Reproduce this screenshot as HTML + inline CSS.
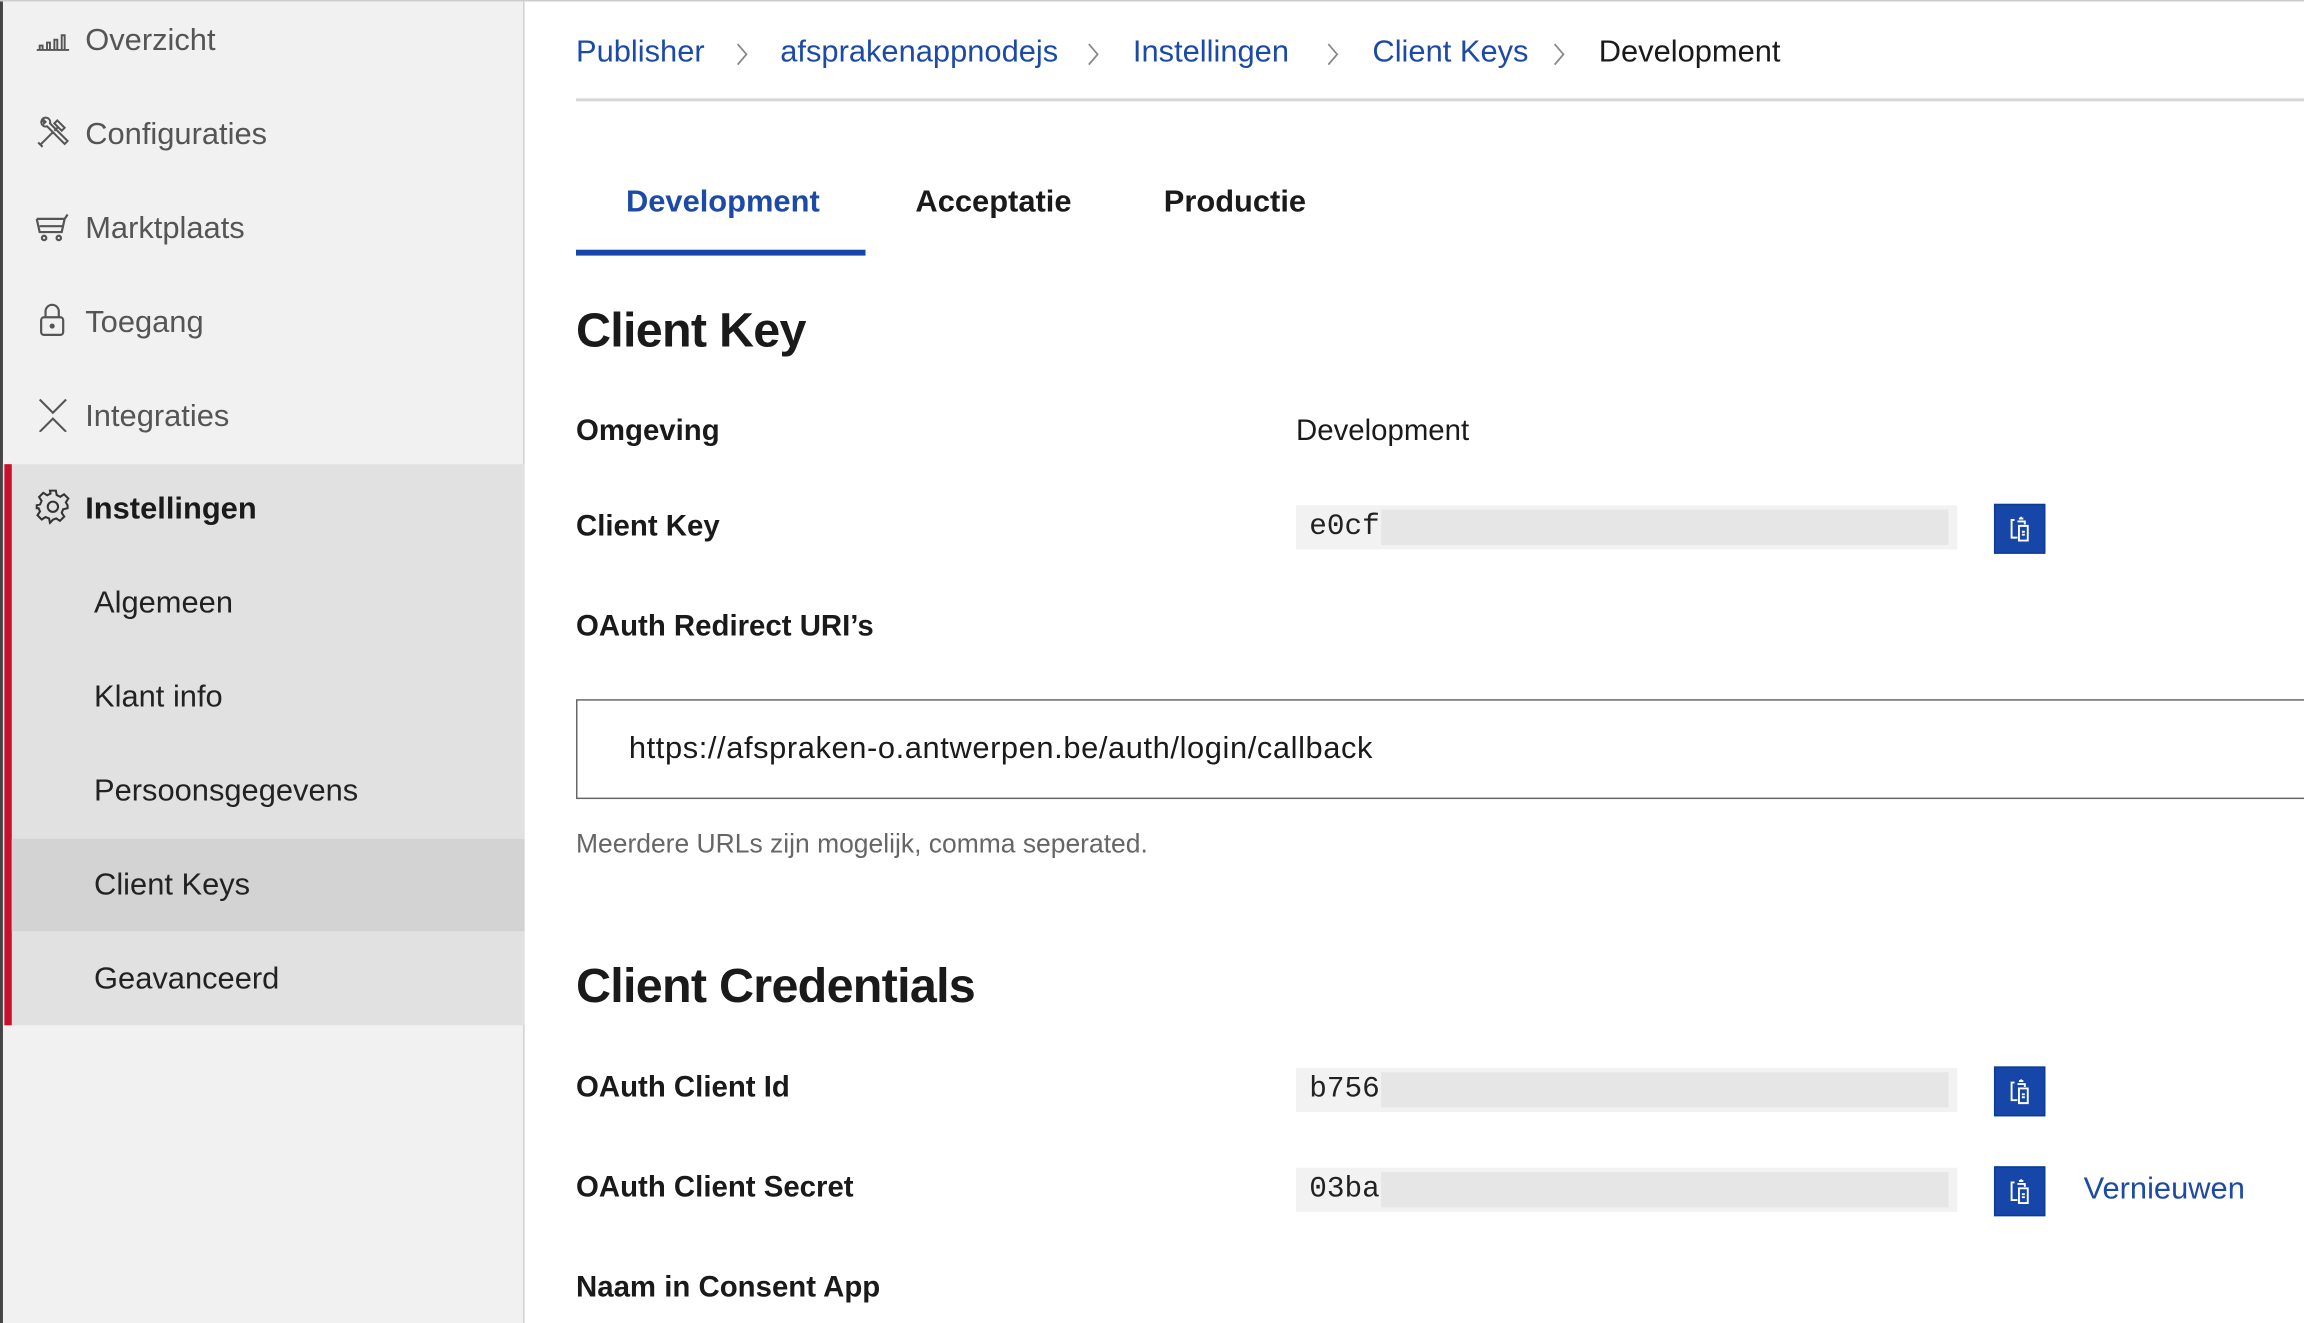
<!DOCTYPE html>
<html><head><meta charset="utf-8"><style>
*{margin:0;padding:0;box-sizing:border-box}
html,body{width:2304px;height:1322px;overflow:hidden;background:#fff}
#w{position:absolute;left:0;top:0;width:1568px;height:900px;transform:scale(1.46939,1.46889);transform-origin:0 0;font-family:"Liberation Sans",sans-serif;color:#1a1a1a;border-top:1px solid #ccc}
.sb{position:absolute;left:0;top:0;width:357px;height:900px;background:#f1f1f1;border-right:1px solid #d0d0d0;border-left:2px solid #444}
.it{position:absolute;left:0;width:355px;height:64px;font-size:21px;color:#555;line-height:64px}
.it span{position:absolute;left:56px;top:-5px}
.it svg{position:absolute;left:22px;top:18px}
.sub{color:#222}
.sub span{left:62px}
.ab{position:absolute;font-size:21px;top:35px;transform:translateY(-50%);color:#1c4aa6}
.gt{position:absolute;top:27px}
.t{position:absolute;transform:translateY(-50%);white-space:nowrap}
.lb{font-weight:bold;font-size:20px;left:392px}
.box{position:absolute;left:882px;width:450px;height:30px;background:#f2f2f2}
.box i{position:absolute;left:58px;top:3px;right:6px;bottom:3px;background:#e6e6e6}
.box b{position:absolute;left:9px;top:50%;transform:translateY(-50%);font-family:"Liberation Mono",monospace;font-weight:normal;font-size:20px;color:#222}
.btn{position:absolute;left:1357px;width:35px;height:34px;background:#1546a8;border:1px solid #0e3a94}
.btn svg{position:absolute;left:8px;top:7px}
</style></head><body><div id="w">
<div class="sb">
 <div class="it" style="top:-5px"><svg width="24" height="24" viewBox="0 0 24 24" fill="none" stroke="#555" stroke-width="1.3"><path d="M1 20H23M3 20v-3h2v3M8 20v-5h2v5M13 20v-7h2v7M18 20v-10h2v10"/></svg><span style="top:0">Overzicht</span></div>
 <div class="it" style="top:59px"><svg width="24" height="24" viewBox="0 0 24 24" fill="none" stroke="#555" stroke-width="1.4"><path d="M3 21l9-9M2 19l3 3M13 11l2-2M15 4l5 5-2 2-5-5zM5 3a3 3 0 0 0 3 5l12 12 2-2-12-12a3 3 0 0 0-5-3l2 2-1 1z"/></svg><span style="top:0">Configuraties</span></div>
 <div class="it" style="top:123px"><svg width="24" height="24" viewBox="0 0 24 24" fill="none" stroke="#555" stroke-width="1.5"><path d="M1 7h19l2-3M1 7l2 9h15l2-9M3 12h16"/><circle cx="6" cy="20" r="1.5"/><circle cx="16" cy="20" r="1.5"/></svg><span style="top:0">Marktplaats</span></div>
 <div class="it" style="top:187px"><svg width="24" height="24" viewBox="0 0 24 24" fill="none" stroke="#555" stroke-width="1.5"><rect x="4" y="10" width="15" height="12" rx="2"/><path d="M7 10V6a4.5 4.5 0 0 1 9 0v4"/><circle cx="11.5" cy="16" r="1" fill="#555"/></svg><span style="top:0">Toegang</span></div>
 <div class="it" style="top:251px"><svg width="24" height="24" viewBox="0 0 24 24" fill="none" stroke="#555" stroke-width="1.4"><path d="M3 2l9 9 9-9M3 24l9-9 9 9"/></svg><span style="top:0">Integraties</span></div>
 <div style="position:absolute;left:0;top:315px;width:355px;height:382px;background:#e1e1e1"></div>
 <div style="position:absolute;left:1px;top:315px;width:5px;height:382px;background:#c8102e"></div>
 <div style="position:absolute;left:6px;top:570px;width:349px;height:63px;background:#d3d3d3"></div>
 <div class="it" style="top:314px;color:#1a1a1a;font-weight:bold"><svg width="24" height="24" viewBox="0 0 24 24" fill="none" stroke="#333" stroke-width="1.4"><path d="M10 1h4l.6 3 2.4 1.2 2.6-1.7 2.9 2.9-1.7 2.6L22 11v2l-3 .7-1 2.4 1.7 2.6-2.9 2.9-2.6-1.7-2.2.9L10 23l-.6-3-2.4-1-2.6 1.7-2.9-2.9 1.7-2.6L2.3 13H1v-2l2.3-.6 1-2.4L2.6 5.4l2.9-2.9 2.6 1.7L10.4 3z"/><circle cx="12" cy="12" r="3.5"/></svg><span style="top:0">Instellingen</span></div>
 <div class="it sub" style="top:378px"><span style="top:0">Algemeen</span></div>
 <div class="it sub" style="top:442px"><span style="top:0">Klant info</span></div>
 <div class="it sub" style="top:506px"><span style="top:0">Persoonsgegevens</span></div>
 <div class="it sub" style="top:570px"><span style="top:0">Client Keys</span></div>
 <div class="it sub" style="top:634px"><span style="top:0">Geavanceerd</span></div>
</div>

<div class="ab" style="left:392px">Publisher</div><svg class="gt" style="left:500px" width="10" height="18" viewBox="0 0 10 18" fill="none" stroke="#888" stroke-width="1.2"><path d="M2 2l6 7-6 7"/></svg>
<div class="ab" style="left:531px">afsprakenappnodejs</div><svg class="gt" style="left:739px" width="10" height="18" viewBox="0 0 10 18" fill="none" stroke="#888" stroke-width="1.2"><path d="M2 2l6 7-6 7"/></svg>
<div class="ab" style="left:771px">Instellingen</div><svg class="gt" style="left:902px" width="10" height="18" viewBox="0 0 10 18" fill="none" stroke="#888" stroke-width="1.2"><path d="M2 2l6 7-6 7"/></svg>
<div class="ab" style="left:934px">Client Keys</div><svg class="gt" style="left:1056px" width="10" height="18" viewBox="0 0 10 18" fill="none" stroke="#888" stroke-width="1.2"><path d="M2 2l6 7-6 7"/></svg>
<div class="ab" style="left:1088px;color:#1a1a1a">Development</div>
<div style="position:absolute;left:392px;top:66px;right:0;height:2px;background:#d6d6d6"></div>

<div class="t" style="left:426px;top:137px;font-size:21px;font-weight:bold;color:#1c4aa6">Development</div>
<div class="t" style="left:623px;top:137px;font-size:21px;font-weight:bold">Acceptatie</div>
<div class="t" style="left:792px;top:137px;font-size:21px;font-weight:bold">Productie</div>
<div style="position:absolute;left:392px;top:169px;width:197px;height:4px;background:#1546a8"></div>

<div class="t" style="left:392px;top:224px;font-size:33px;font-weight:bold;letter-spacing:-0.5px">Client Key</div>
<div class="t lb" style="top:293px">Omgeving</div>
<div class="t" style="left:882px;top:293px;font-size:20px">Development</div>
<div class="t lb" style="top:358px">Client Key</div>
<div class="box" style="top:343px"><i></i><b>e0cf</b></div>
<div class="btn" style="top:342px"><svg width="18" height="18" viewBox="0 0 18 18" fill="none" stroke="#fff" stroke-width="1.3"><path d="M5 3h-2v12h4M8 2h3M7 4h5v2M9 1l1 1M8 7h6v10H8z"/><path d="M10 11h2M10 13h2"/></svg></div>
<div class="t lb" style="top:426px">OAuth Redirect URI’s</div>
<div style="position:absolute;left:392px;top:475px;width:1200px;height:68px;border:1px solid #666"></div>
<div class="t" style="left:428px;top:509px;font-size:21px;letter-spacing:0.4px">https://afspraken-o.antwerpen.be/auth/login/callback</div>
<div class="t" style="left:392px;top:574px;font-size:18px;color:#666">Meerdere URLs zijn mogelijk, comma seperated.</div>

<div class="t" style="left:392px;top:670px;font-size:33px;font-weight:bold;letter-spacing:-0.5px">Client Credentials</div>
<div class="t lb" style="top:740px">OAuth Client Id</div>
<div class="box" style="top:726px"><i></i><b>b756</b></div>
<div class="btn" style="top:725px"><svg width="18" height="18" viewBox="0 0 18 18" fill="none" stroke="#fff" stroke-width="1.3"><path d="M5 3h-2v12h4M8 2h3M7 4h5v2M9 1l1 1M8 7h6v10H8z"/><path d="M10 11h2M10 13h2"/></svg></div>
<div class="t lb" style="top:808px">OAuth Client Secret</div>
<div class="box" style="top:794px"><i></i><b>03ba</b></div>
<div class="btn" style="top:793px"><svg width="18" height="18" viewBox="0 0 18 18" fill="none" stroke="#fff" stroke-width="1.3"><path d="M5 3h-2v12h4M8 2h3M7 4h5v2M9 1l1 1M8 7h6v10H8z"/><path d="M10 11h2M10 13h2"/></svg></div>
<div class="t" style="left:1418px;top:809px;font-size:21px;color:#1c4aa6">Vernieuwen</div>
<div class="t lb" style="top:876px">Naam in Consent App</div>
</div></body></html>
